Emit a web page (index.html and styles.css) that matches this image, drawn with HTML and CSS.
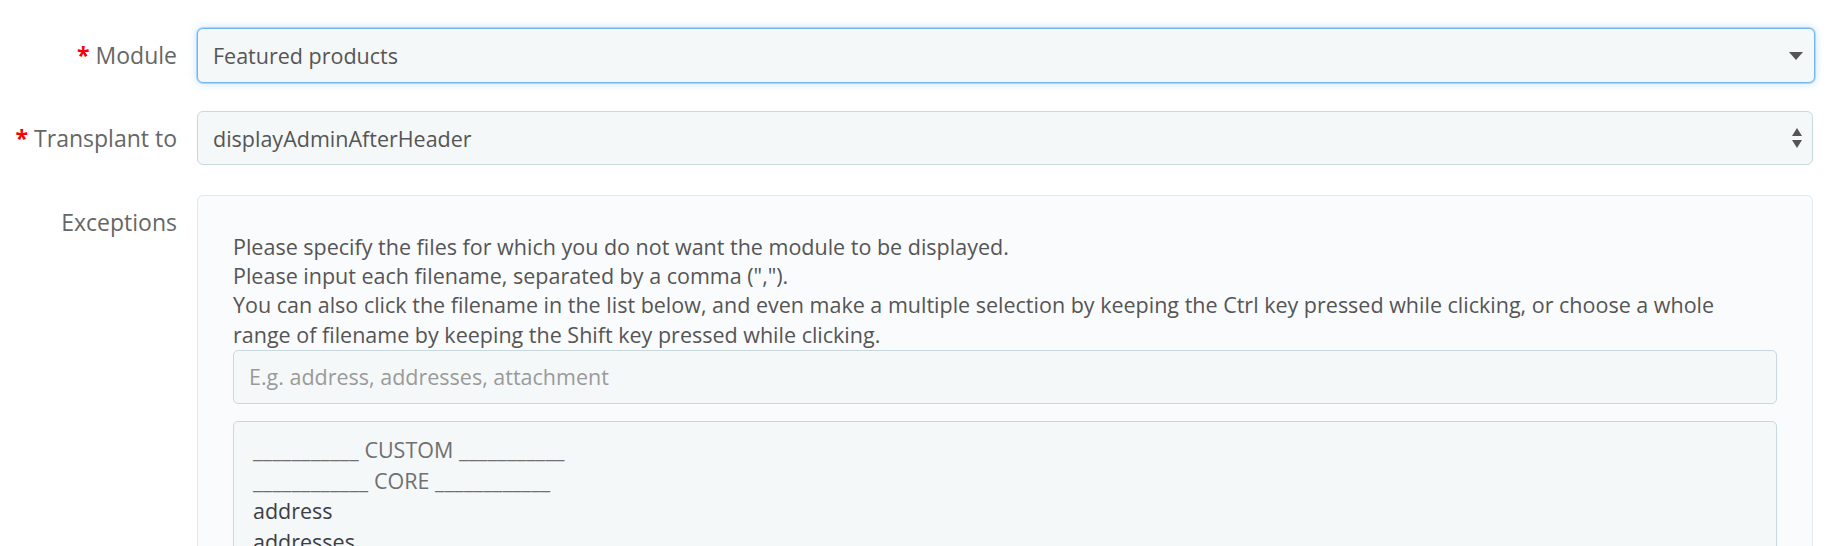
FILE: index.html
```html
<!DOCTYPE html>
<html lang="en">
<head>
<meta charset="utf-8">
<title>Transplant a module</title>
<link rel="stylesheet" href="styles.css">
</head>
<body>
<form class="form">
  <div class="row row-module">
    <label class="label"><span class="req">*</span> Module</label>
    <div class="select is-focus">
      <span class="select-text">Featured products</span>
      <svg class="caret" width="14" height="8" viewBox="0 0 14 8"><path d="M0 0H14L7 8Z" fill="#555"/></svg>
    </div>
  </div>
  <div class="row row-hook">
    <label class="label"><span class="req">*</span> Transplant to</label>
    <div class="select">
      <span class="select-text">displayAdminAfterHeader</span>
      <svg class="spin" width="10" height="20" viewBox="0 0 10 20"><path d="M5 0L10 8H0Z M0 12H10L5 20Z" fill="#555"/></svg>
    </div>
  </div>
  <div class="row row-exc">
    <label class="label">Exceptions</label>
    <div class="panel">
      <p class="help">Please specify the files for which you do not want the module to be displayed.<br>Please input each filename, separated by a comma (",").<br>You can also click the filename in the list below, and even make a multiple selection by keeping the Ctrl key pressed while clicking, or choose a whole range of filename by keeping the Shift key pressed while clicking.</p>
      <input class="text-input" type="text" placeholder="E.g. address, addresses, attachment">
      <div class="list">
        <div class="opt opt-sep"><span class="rule">___________</span> CUSTOM <span class="rule">___________</span></div>
        <div class="opt opt-sep"><span class="rule">____________</span> CORE <span class="rule">____________</span></div>
        <div class="opt">address</div>
        <div class="opt">addresses</div>
        <div class="opt">attachment</div>
        <div class="opt">authentication</div>
        <div class="opt">best-sales</div>
      </div>
    </div>
  </div>
</form>
</body>
</html>
```
FILE: styles.css
```css
html, body {
  margin: 0;
  padding: 0;
  background: #ffffff;
}
body {
  font-family: "Open Sans", "Liberation Sans", sans-serif;
  color: #555555;
  overflow: hidden;
  height: 546px;
}
.form {
  padding: 28px 25px 0 0;
}
.row {
  display: grid;
  grid-template-columns: 177px 1fr;
  column-gap: 20px;
  align-items: start;
}
.row-module { margin-bottom: 28px; }
.row-hook { margin-bottom: 30px; }
.label {
  font-size: 23px;
  line-height: 54px;
  color: #666666;
  text-align: right;
  white-space: nowrap;
}
.req {
  color: #ff0000;
  font-weight: 700;
}
.select {
  box-sizing: border-box;
  height: 54px;
  border: 1px solid #c9d8dd;
  border-radius: 6px;
  background: #f5f8f9;
  display: flex;
  align-items: center;
  justify-content: space-between;
  padding: 0 10px 0 15px;
  font-size: 21.5px;
  color: #555555;
}
.select.is-focus {
  height: 55px;
  border-color: #72b6f0;
  box-shadow: 0 0 0 1px rgba(114, 182, 240, 0.45), 0 0 8px rgba(114, 182, 240, 0.45);
  margin-right: -2px;
  padding-right: 11px;
}
.caret { display: block; margin-top: 1px; }
.spin { display: block; }
.panel {
  box-sizing: border-box;
  border: 1px solid #e1eaf0;
  border-radius: 6px;
  background: #fafbfd;
  padding: 36px 35px 0 35px;
  height: 420px;
}
.help {
  margin: 0;
  padding-right: 30px;
  font-size: 21.5px;
  line-height: 29.2px;
  color: #555555;
}
.text-input {
  display: block;
  box-sizing: border-box;
  width: 100%;
  height: 54px;
  margin: 1px 0 0 0;
  border: 1px solid #c9d8dd;
  border-radius: 5px;
  background: #f5f8f9;
  padding: 0 15px;
  font-family: "Open Sans", "Liberation Sans", sans-serif;
  font-size: 21.5px;
  color: #555555;
  outline: none;
}
.text-input::placeholder {
  color: #9a9a9a;
  opacity: 1;
}
.list {
  margin-top: 17px;
  border: 1px solid #c9d8dd;
  border-radius: 5px;
  background: #f5f8f9;
  padding: 13px 19px;
  height: 300px;
}
.opt {
  font-size: 21.5px;
  line-height: 30.7px;
  color: #3c3f44;
  white-space: nowrap;
}
.opt-sep {
  color: #707070;
}
.rule {
  letter-spacing: 0.2px;
}
```
